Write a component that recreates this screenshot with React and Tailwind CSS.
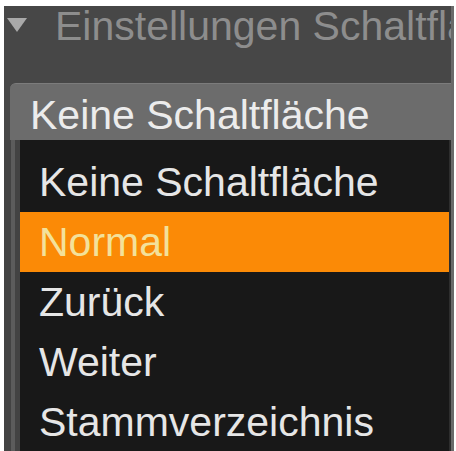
export default function App() {
  const items = ["Keine Schaltfläche", "Normal", "Zurück", "Weiter", "Stammverzeichnis"];
  return (
    <div
      className="w-[456px] h-[451px] bg-white pt-[6px] pl-[4px] pr-[2px] overflow-hidden"
      style={{ fontFamily: '"Liberation Sans", Arial, sans-serif' }}
    >
      <div className="h-full bg-[#474747] flex flex-col overflow-hidden border-r-[3px] border-[#6a6a6a]">
        <div className="h-[77px] shrink-0 flex items-start whitespace-nowrap overflow-hidden">
          <svg width="20" height="16" viewBox="0 0 20 16" className="ml-[3px] mt-[12px] shrink-0">
            <polygon points="0,0 20,0 10,14" fill="#a9a9a9" />
          </svg>
          <span className="ml-[28px] mt-[-1px] text-[41px] leading-[42px] text-[#8d8d8d]">
            Einstellungen Schaltfläche
          </span>
        </div>
        <div className="h-[57px] shrink-0 ml-[6px] bg-[#6c6c6c] rounded-tl-[6px] pl-[20px] pt-[5px] text-[41px] leading-[52px] text-[#ececec] whitespace-nowrap border-t border-[#7c7c7c]">
          Keine Schaltfläche
        </div>
        <div className="flex-1 flex min-h-0">
          <div className="w-[16px] shrink-0 bg-[#434343] flex">
            <div className="ml-[7px] w-[4px] bg-[#5c5c5c]" />
          </div>
          <div className="flex-1 bg-[#181818] pt-[12px] overflow-hidden">
            {items.map((t, i) => (
              <div
                key={t}
                className={
                  i === 1
                    ? "h-[60px] bg-[#fb8a06] pl-[19px] text-[41px] leading-[60px] text-[#f3e19a] whitespace-nowrap"
                    : "h-[60px] pl-[19px] text-[41px] leading-[60px] text-[#e6e6e6] whitespace-nowrap"
                }
              >
                {t}
              </div>
            ))}
          </div>
          <div className="w-[2px] shrink-0 bg-[#2e2e2e]" />
        </div>
      </div>
    </div>
  );
}
